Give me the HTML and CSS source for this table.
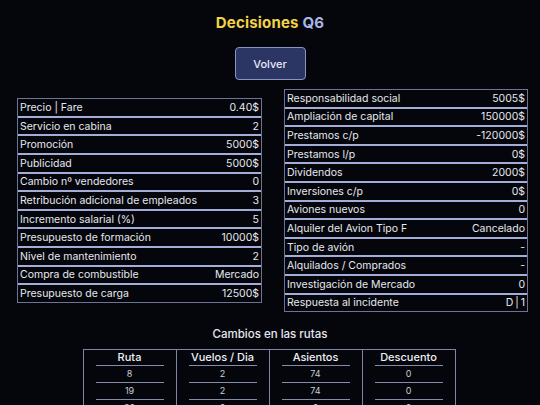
FILE: index.html
```html
<!DOCTYPE html>
<html lang="es">
<head>
<meta charset="utf-8">
<title>Decisiones Q6</title>
<link rel="stylesheet" href="styles.css">
</head>
<body>
<div class="page">
  <h1 class="title"><span class="title-main">Decisiones</span> <span class="title-q">Q6</span></h1>
  <div class="actions"><button class="btn">Volver</button></div>
  <div class="tables">
    <div class="kv kv-left">
      <div class="row"><span>Precio | Fare</span><span>0.40$</span></div>
      <div class="row"><span>Servicio en cabina</span><span>2</span></div>
      <div class="row"><span>Promoción</span><span>5000$</span></div>
      <div class="row"><span>Publicidad</span><span>5000$</span></div>
      <div class="row"><span>Cambio nº vendedores</span><span>0</span></div>
      <div class="row"><span>Retribución adicional de empleados</span><span>3</span></div>
      <div class="row"><span>Incremento salarial (%)</span><span>5</span></div>
      <div class="row"><span>Presupuesto de formación</span><span>10000$</span></div>
      <div class="row"><span>Nivel de mantenimiento</span><span>2</span></div>
      <div class="row"><span>Compra de combustible</span><span>Mercado</span></div>
      <div class="row"><span>Presupuesto de carga</span><span>12500$</span></div>
    </div>
    <div class="kv kv-right">
      <div class="row"><span>Responsabilidad social</span><span>5005$</span></div>
      <div class="row"><span>Ampliación de capital</span><span>150000$</span></div>
      <div class="row"><span>Prestamos c/p</span><span>-120000$</span></div>
      <div class="row"><span>Prestamos l/p</span><span>0$</span></div>
      <div class="row"><span>Dividendos</span><span>2000$</span></div>
      <div class="row"><span>Inversiones c/p</span><span>0$</span></div>
      <div class="row"><span>Aviones nuevos</span><span>0</span></div>
      <div class="row"><span>Alquiler del Avion Tipo F</span><span>Cancelado</span></div>
      <div class="row"><span>Tipo de avión</span><span>-</span></div>
      <div class="row"><span>Alquilados / Comprados</span><span>-</span></div>
      <div class="row"><span>Investigación de Mercado</span><span>0</span></div>
      <div class="row"><span>Respuesta al incidente</span><span>D&thinsp;|&thinsp;1</span></div>
    </div>
  </div>
  <h2 class="subtitle">Cambios en las rutas</h2>
  <div class="routes">
    <div class="col">
      <div class="col-head">Ruta</div>
      <div class="cell">8</div>
      <div class="cell">19</div>
      <div class="cell">30</div>
    </div>
    <div class="col">
      <div class="col-head">Vuelos / Dia</div>
      <div class="cell">2</div>
      <div class="cell">2</div>
      <div class="cell">0</div>
    </div>
    <div class="col">
      <div class="col-head">Asientos</div>
      <div class="cell">74</div>
      <div class="cell">74</div>
      <div class="cell">0</div>
    </div>
    <div class="col">
      <div class="col-head">Descuento</div>
      <div class="cell">0</div>
      <div class="cell">0</div>
      <div class="cell">0</div>
    </div>
  </div>
</div>
</body>
</html>
```
FILE: styles.css
```css
html, body {
  margin: 0;
  padding: 0;
  background: #05060b;
  height: 100%;
  overflow: hidden;
}
body {
  font-family: "Inter", "DejaVu Sans", sans-serif;
  color: #e6e8f0;
}
.page {
  display: flex;
  flex-direction: column;
  align-items: stretch;
}
.title {
  margin: 12px 0 0;
  height: 22px;
  font-size: 15px;
  line-height: 22px;
  font-weight: 700;
  text-align: center;
  letter-spacing: 0.2px;
}
.title-main { color: #f2d348; }
.title-q { color: #a9b6e6; }
.actions {
  display: flex;
  justify-content: center;
  margin-top: 13px;
}
.btn {
  width: 71px;
  height: 33px;
  background: #2c3665;
  border: 1px solid #8a94c2;
  border-radius: 4px;
  color: #e8eaf4;
  font-family: inherit;
  font-size: 11px;
  font-weight: 500;
  padding: 0;
}
.tables {
  display: flex;
  align-items: center;
  gap: 22px;
  padding-left: 17px;
  margin-top: 9px;
}
.kv {
  border: 1px solid #6d7394;
  display: flex;
  flex-direction: column;
}
.kv-left { width: 245px; box-sizing: border-box; }
.kv-right { width: 244px; box-sizing: border-box; }
.row {
  display: flex;
  justify-content: space-between;
  align-items: center;
  height: 18.6px;
  box-sizing: border-box;
  padding: 0 2px 0 2px;
  font-size: 10.5px;
  font-weight: 400;
  border-top: 2px solid #a4acd8;
}
.row:first-child { border-top: none; height: 16.6px; }
.subtitle {
  margin: 15px 0 0;
  font-size: 11.5px;
  line-height: 14px;
  font-weight: 500;
  text-align: center;
  color: #e6e8f0;
}
.routes {
  display: grid;
  grid-template-columns: repeat(4, 93px);
  align-self: center;
  margin-top: 8px;
  margin-left: -2px;
  border-top: 1px solid #7e85a8;
  border-left: 1px solid #7e85a8;
}
.col {
  border-right: 1px solid #7e85a8;
  display: flex;
  flex-direction: column;
}
.col-head {
  height: 15px;
  line-height: 15px;
  text-align: center;
  font-size: 11px;
  font-weight: 500;
  color: #eef0f6;
}
.cell {
  margin: 0 12px;
  height: 16px;
  line-height: 15px;
  border-top: 1px solid #868ca8;
  text-align: center;
  font-size: 9px;
  color: #c9cdd9;
}
```
